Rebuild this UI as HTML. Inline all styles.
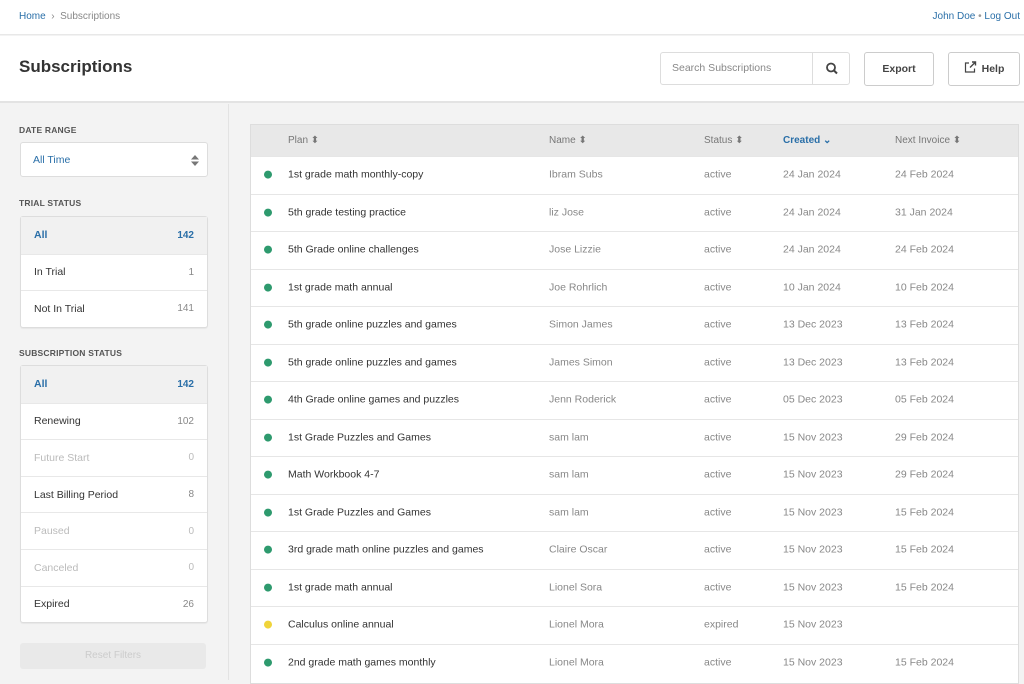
<!DOCTYPE html>
<html><head><style>
*{box-sizing:border-box;margin:0;padding:0}
body{width:1024px;height:680px;overflow:hidden;font-family:"Liberation Sans",sans-serif;font-size:10.5px;color:#333;background:#f3f3f3;position:relative}
.top{position:absolute;left:0;top:0;width:1024px;height:35px;background:#fff;border-bottom:1px solid #e8e8e8}
.top .bc{position:absolute;left:19px;top:11px;font-size:10px;color:#888}
.top .bc a{color:#2a6fa8}
.top .u{position:absolute;right:4px;top:11px;font-size:10px;color:#2a6fa8}
.hdr{position:absolute;left:0;top:36px;width:1024px;height:67px;background:#fff;border-bottom:2px solid #e3e3e3}
.hdr h1{position:absolute;left:19px;top:21px;font-size:17px;font-weight:bold;color:#333}
.search{position:absolute;left:660px;top:16px;width:190px;height:33px;border:1px solid #ddd;border-radius:3px;background:#fff}
.search span{position:absolute;left:11px;top:9px;color:#888;font-size:10.5px}
.search .b{position:absolute;left:151px;top:0;width:38px;height:31px;border-left:1px solid #ddd}
.btn{position:absolute;top:16px;height:34px;border:1px solid #ccc;border-radius:3px;background:#fff;font-weight:bold;font-size:10.5px;color:#444;text-align:center;line-height:32px}
.side{position:absolute;left:0;top:104px;width:229px;height:576px;border-right:1px solid #e3e3e3}
.lbl{position:absolute;left:19px;font-size:8.5px;font-weight:bold;color:#555;letter-spacing:.2px}
.sel{position:absolute;left:20px;top:142px;width:188px;height:35px;background:#fff;border:1px solid #ddd;border-radius:3px;color:#2a6fa8;padding:11px 12px;font-size:10.5px}
.list{position:absolute;left:20px;width:188px;background:#fff;border:1px solid #ddd;border-radius:3px;box-shadow:0 1px 1px rgba(0,0,0,.05)}
.list div{height:36.6px;border-top:1px solid #e8e8e8;padding:0 13px;display:flex;justify-content:space-between;align-items:center;font-size:10.5px;color:#333}
.list div:first-child{border-top:0}
.list div span{color:#888;font-size:10px}
.list .a{background:#f1f1f1;color:#2a6fa8;font-weight:bold}
.list .a span{color:#2a6fa8;font-weight:bold}
.list .d{color:#bbb}.list .d span{color:#bbb}
.reset{position:absolute;left:20px;top:643px;width:186px;height:26px;background:#e9e9e9;border-radius:3px;color:#ccc;font-size:10px;text-align:center;line-height:26px}
.tbl{position:absolute;left:250px;top:124px;width:769px;height:560px;background:#fff;border:1px solid #ddd}
.row{position:absolute;left:0;width:767px;border-top:1px solid #e6e6e6;font-size:10.5px;color:#888}
.row>*{position:absolute;top:50%;transform:translateY(-55%);white-space:nowrap}
.th{background:#e8e8e8;border-top:0;color:#777;font-size:10px}
.dot{left:13px;width:8px;height:8px;border-radius:50%;background:#2e9a6e}
.c1{left:37px;color:#333}.c2{left:298px}.c3{left:453px}.c4{left:532px}.c5{left:644px}
</style></head><body>
<div class="top"><div class="bc"><a>Home</a> &nbsp;›&nbsp; Subscriptions</div><div class="u">John Doe <span style="color:#999">•</span> Log Out</div></div>
<div class="hdr"><h1>Subscriptions</h1>
<div class="search"><span>Search Subscriptions</span><div class="b"><svg width="38" height="31" viewBox="0 0 38 31"><circle cx="18" cy="14.5" r="4" fill="none" stroke="#444" stroke-width="1.8"/><path d="M21 17.5l3 3" stroke="#444" stroke-width="2"/></svg></div></div>
<div class="btn" style="left:864px;width:70px">Export</div>
<div class="btn" style="left:948px;width:72px"><svg width="13" height="12" viewBox="0 0 13 12" style="vertical-align:-1px;margin-right:5px"><path d="M5 2H1.5v9h9V7.5" fill="none" stroke="#444" stroke-width="1.2"/><path d="M6 6.5L11.5 1M8 1h3.5v3.5" fill="none" stroke="#444" stroke-width="1.4"/></svg>Help</div>
</div>
<div class="side">
</div>
<div class="lbl" style="top:125px">DATE RANGE</div>
<div class="sel">All Time<svg style="position:absolute;right:8px;top:12px" width="8" height="11" viewBox="0 0 8 11"><path d="M0 4.5L4 0 8 4.5zM0 6.5L4 11 8 6.5z" fill="#777"/></svg></div>
<div class="lbl" style="top:198px">TRIAL STATUS</div>
<div class="list" style="top:216px"><div class="a">All<span>142</span></div><div>In Trial<span>1</span></div><div>Not In Trial<span>141</span></div></div>
<div class="lbl" style="top:348px">SUBSCRIPTION STATUS</div>
<div class="list" style="top:365px"><div class="a">All<span>142</span></div><div>Renewing<span>102</span></div><div class="d">Future Start<span>0</span></div><div>Last Billing Period<span>8</span></div><div class="d">Paused<span>0</span></div><div class="d">Canceled<span>0</span></div><div>Expired<span>26</span></div></div>
<div class="reset">Reset Filters</div>
<div class="tbl">
<div class="row th" style="top:0;height:31px"><span class="c1" style="color:#777">Plan ⬍</span><span class="c2">Name ⬍</span><span class="c3">Status ⬍</span><span class="c4" style="color:#2a6fa8;font-weight:bold">Created ⌄</span><span class="c5">Next Invoice ⬍</span></div>
<div id="rows"></div>
</div>
<script>
var d=[["1st grade math monthly-copy","Ibram Subs","active","24 Jan 2024","24 Feb 2024"],
["5th grade testing practice","liz Jose","active","24 Jan 2024","31 Jan 2024"],
["5th Grade online challenges","Jose Lizzie","active","24 Jan 2024","24 Feb 2024"],
["1st grade math annual","Joe Rohrlich","active","10 Jan 2024","10 Feb 2024"],
["5th grade online puzzles and games","Simon James","active","13 Dec 2023","13 Feb 2024"],
["5th grade online puzzles and games","James Simon","active","13 Dec 2023","13 Feb 2024"],
["4th Grade online games and puzzles","Jenn Roderick","active","05 Dec 2023","05 Feb 2024"],
["1st Grade Puzzles and Games","sam lam","active","15 Nov 2023","29 Feb 2024"],
["Math Workbook 4-7","sam lam","active","15 Nov 2023","29 Feb 2024"],
["1st Grade Puzzles and Games","sam lam","active","15 Nov 2023","15 Feb 2024"],
["3rd grade math online puzzles and games","Claire Oscar","active","15 Nov 2023","15 Feb 2024"],
["1st grade math annual","Lionel Sora","active","15 Nov 2023","15 Feb 2024"],
["Calculus online annual","Lionel Mora","expired","15 Nov 2023",""],
["2nd grade math games monthly","Lionel Mora","active","15 Nov 2023","15 Feb 2024"]];
var h="";d.forEach(function(r,i){var t=31+i*37.5;h+='<div class="row" style="top:'+t+'px;height:37.5px"><span class="dot" style="'+(r[2]=="expired"?"background:#f0d43a":"")+'"></span><span class="c1">'+r[0]+'</span><span class="c2">'+r[1]+'</span><span class="c3">'+r[2]+'</span><span class="c4">'+r[3]+'</span><span class="c5">'+r[4]+'</span></div>'});
document.getElementById("rows").innerHTML=h;
</script>
</body></html>
